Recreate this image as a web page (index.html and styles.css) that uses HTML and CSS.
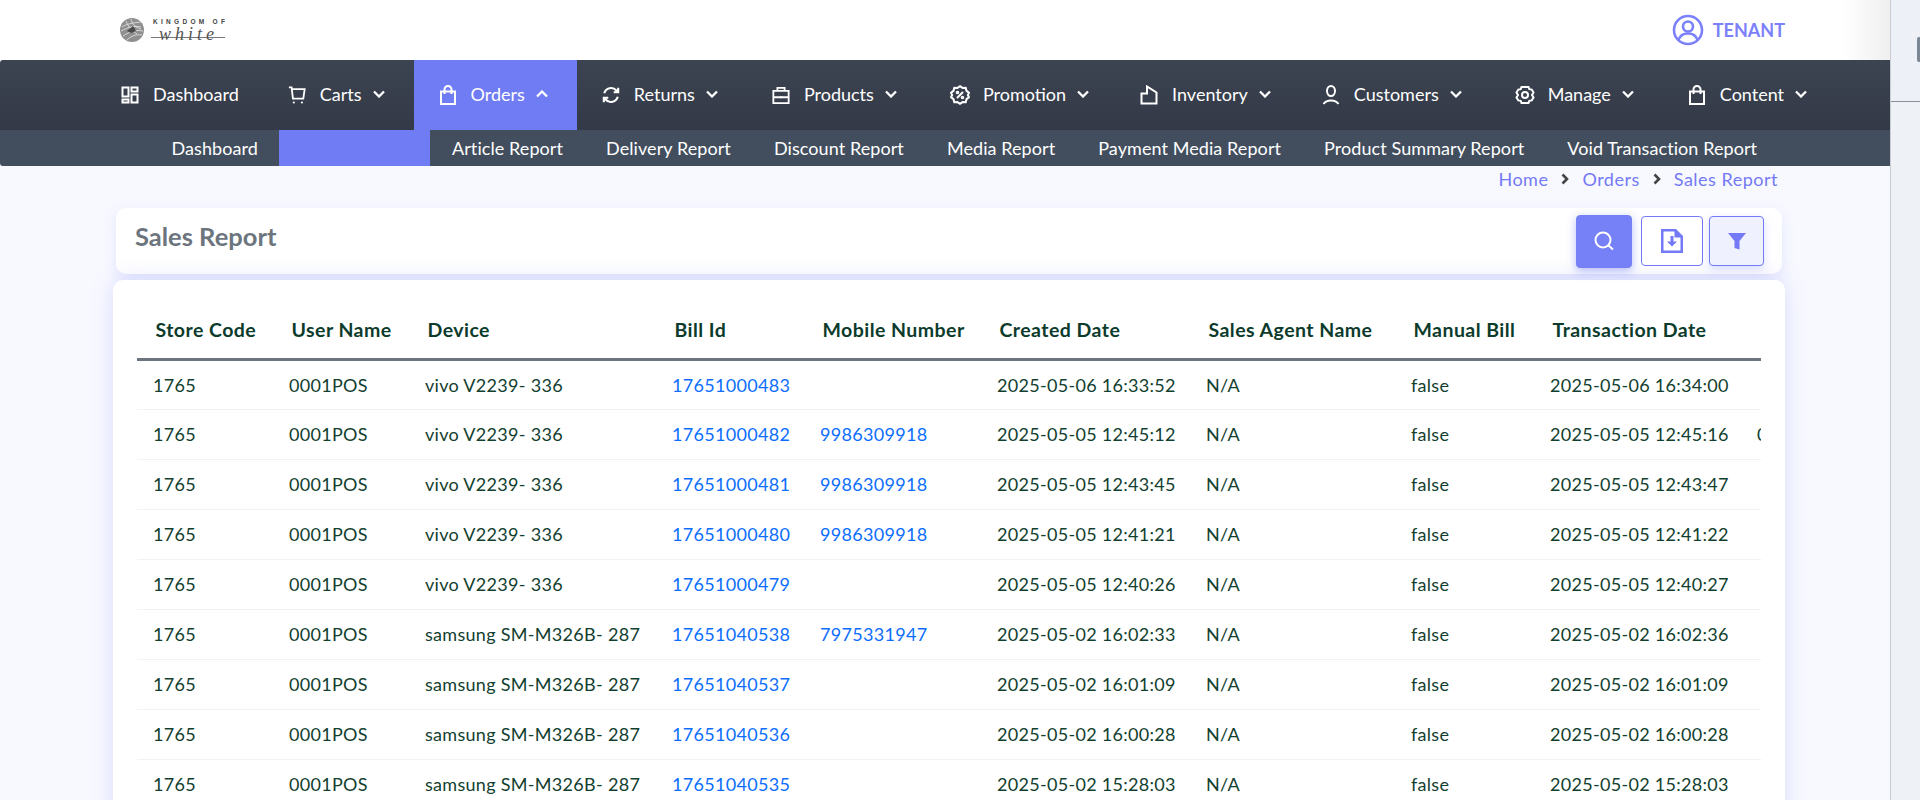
FILE: index.html
```html
<!DOCTYPE html>
<html lang="en">
<head>
<meta charset="utf-8">
<title>Sales Report</title>
<link rel="stylesheet" href="styles.css">
</head>
<body>
<div class="shell">
  <div class="app">
    <header class="topbar">
      <div class="logo">
        <svg class="logo-mark" viewBox="0 0 24 24" width="24" height="24"><circle cx="12" cy="12" r="12" fill="#8f8f8f"/><g fill="none" stroke="#e8e8e8" stroke-width=".8"><path d="M2 9c5-3 9-4 19-5M1 13c6-3 12-6 20-4M3 18c5-3 11-7 20-5M7 22c4-4 9-6 15-5M6 3c2 5 5 9 11 13M11 1c1 4 3 8 10 10"/></g><path d="M7 13l6-5 3 5-5 2z" fill="#4a4a4a"/></svg>
        <div class="logo-text"><span class="logo-top">KINGDOM OF</span><span class="logo-script">white</span></div>
      </div>
      <div class="tenant">
        <svg viewBox="0 0 32 32" width="32" height="32" fill="none" stroke="#7c80fb" stroke-width="2.6"><circle cx="16" cy="16" r="14"/><circle cx="16" cy="12.5" r="5"/><path d="M6.500 26c1.500-5 5.500-6.500 9.500-6.500s8 1.500 9.500 6.500"/></svg>
        <span>TENANT</span>
      </div>
    </header>

    <nav class="mainnav">
      <a class="nav-item first"><svg class="ico" viewBox="0 0 18 18"><path d="M1.500 1.500h6v9h-6zM10.500 1.500h6v4h-6zM1.500 13.500h6v3h-6zM10.500 8.500h6v8h-6z"/></svg><span>Dashboard</span></a>
      <a class="nav-item"><svg class="ico" viewBox="0 0 20 20"><path d="M1 1.500h3l1.500 12.500h11.500l1.500-10.500H4.300"/><circle cx="6.500" cy="18.300" r="1.200" fill="#fff" stroke="none"/><circle cx="15.500" cy="18.300" r="1.200" fill="#fff" stroke="none"/></svg><span>Carts</span><svg class="chev" viewBox="0 0 12 8"><path d="M1 1.500l5 5 5-5"/></svg></a>
      <a class="nav-item active"><svg class="ico" viewBox="0 0 18 20"><path d="M2 6.500h14V19H2zM5.500 9V4.500a3.500 3.500 0 0 1 7 0V9"/></svg><span>Orders</span><svg class="chev" viewBox="0 0 12 8"><path d="M1 6.500l5-5 5 5"/></svg></a>
      <a class="nav-item"><svg class="ico thick" viewBox="0 0 20 20"><path d="M2.500 8a7.800 7.800 0 0 1 13.500-3l2 2M17.500 12a7.800 7.800 0 0 1-13.500 3l-2-2M18 2v5h-5M2 18v-5h5"/></svg><span>Returns</span><svg class="chev" viewBox="0 0 12 8"><path d="M1 1.500l5 5 5-5"/></svg></a>
      <a class="nav-item"><svg class="ico" viewBox="0 0 20 20"><path d="M1.500 5.500h17V19h-17zM6 5.500V2h8v3.500M1.500 12.500h17"/><path d="M9 11.500h2v2H9z" fill="#fff" stroke="none"/></svg><span>Products</span><svg class="chev" viewBox="0 0 12 8"><path d="M1 1.500l5 5 5-5"/></svg></a>
      <a class="nav-item promo"><svg class="ico wide" viewBox="0 0 20 20"><path d="M10 1.200l2.600 1.700 3.100-.1.800 3 2.400 1.900-1 2.300 1 2.300-2.400 1.900-.8 3-3.100-.1L10 18.800l-2.600-1.700-3.100.1-.8-3-2.400-1.900 1-2.300-1-2.300L3.500 5.800l.8-3 3.100.1zM13 7l-6 6"/><circle cx="7.500" cy="7.500" r=".8"/><circle cx="12.500" cy="12.500" r=".8"/></svg><span>Promotion</span><svg class="chev" viewBox="0 0 12 8"><path d="M1 1.500l5 5 5-5"/></svg></a>
      <a class="nav-item inv"><svg class="ico" viewBox="0 0 18 20"><path d="M1.500 8.500H7V1.500l9.500 6V18.500h-15z"/></svg><span>Inventory</span><svg class="chev" viewBox="0 0 12 8"><path d="M1 1.500l5 5 5-5"/></svg></a>
      <a class="nav-item"><svg class="ico" viewBox="0 0 18 20"><ellipse cx="9" cy="6" rx="4" ry="5"/><path d="M1.500 19c2-3 4.500-3.500 7.500-3.500s5.500.5 7.500 3.500"/></svg><span>Customers</span><svg class="chev" viewBox="0 0 12 8"><path d="M1 1.500l5 5 5-5"/></svg></a>
      <a class="nav-item"><svg class="ico wide" viewBox="0 0 20 20"><path d="M6.500 2h7l.8 2.200 2.400.4 1.800 3L17 10l1.500 2.400-1.800 3-2.400.4-.8 2.200h-7l-.8-2.200-2.400-.4-1.800-3L3 10 1.500 7.600l1.800-3 2.400-.4z"/><circle cx="10" cy="10" r="3"/></svg><span>Manage</span><svg class="chev" viewBox="0 0 12 8"><path d="M1 1.500l5 5 5-5"/></svg></a>
      <a class="nav-item"><svg class="ico" viewBox="0 0 18 20"><path d="M2 6.500h14V19H2zM5.500 9V4.500a3.500 3.500 0 0 1 7 0V9"/></svg><span>Content</span><svg class="chev" viewBox="0 0 12 8"><path d="M1 1.500l5 5 5-5"/></svg></a>
    </nav>

    <nav class="subnav">
      <a class="sub-item">Dashboard</a>
      <a class="sub-item sub-active"></a>
      <a class="sub-item">Article Report</a>
      <a class="sub-item">Delivery Report</a>
      <a class="sub-item">Discount Report</a>
      <a class="sub-item">Media Report</a>
      <a class="sub-item">Payment Media Report</a>
      <a class="sub-item">Product Summary Report</a>
      <a class="sub-item">Void Transaction Report</a>
    </nav>

    <main class="content">
      <div class="crumbs">
        <a>Home</a><svg class="crumb-sep" viewBox="0 0 8 12"><path d="M1.500 1.500l4.500 4.500-4.500 4.500"/></svg>
        <a>Orders</a><svg class="crumb-sep" viewBox="0 0 8 12"><path d="M1.500 1.500l4.500 4.500-4.500 4.500"/></svg>
        <a>Sales Report</a>
      </div>

      <section class="title-card">
        <h1>Sales Report</h1>
        <div class="actions">
          <button class="btn btn-search"><svg viewBox="0 0 22 22" width="22" height="22" fill="none" stroke="#fff" stroke-width="2"><circle cx="10" cy="10" r="7.500"/><path d="M15.500 15.500l4.500 4"/></svg></button>
          <button class="btn btn-file"><svg viewBox="0 0 24 26" width="24" height="26"><path fill="#7479f5" fill-rule="evenodd" d="M1 1h15l7 7v17H1zM3.500 3.500v19h17V9.500H14.500V3.500z"/><path fill="#7479f5" d="M10.500 8h3v5.500H17L12 18.500 7 13.500h3.500z"/></svg></button>
          <button class="btn btn-filter"><svg viewBox="0 0 20 20" width="20" height="20"><path fill="#7479f5" d="M1 2h18l-6.500 8v8.500l-5-1.500v-7z"/></svg></button>
        </div>
      </section>

      <section class="table-card">
        <div class="table-wrap">
          <table class="report">
            <colgroup>
              <col class="c1"><col class="c2"><col class="c3"><col class="c4"><col class="c5"><col class="c6"><col class="c7"><col class="c8"><col class="c9"><col class="c10">
            </colgroup>
            <thead>
              <tr><th>Store Code</th><th>User Name</th><th>Device</th><th>Bill Id</th><th>Mobile Number</th><th>Created Date</th><th>Sales Agent Name</th><th>Manual Bill</th><th>Transaction Date</th><th></th></tr>
            </thead>
            <tbody>
              <tr><td>1765</td><td>0001POS</td><td>vivo V2239- 336</td><td><a>17651000483</a></td><td></td><td>2025-05-06 16:33:52</td><td>N/A</td><td>false</td><td>2025-05-06 16:34:00</td><td></td></tr>
              <tr><td>1765</td><td>0001POS</td><td>vivo V2239- 336</td><td><a>17651000482</a></td><td><a>9986309918</a></td><td>2025-05-05 12:45:12</td><td>N/A</td><td>false</td><td>2025-05-05 12:45:16</td><td>0</td></tr>
              <tr><td>1765</td><td>0001POS</td><td>vivo V2239- 336</td><td><a>17651000481</a></td><td><a>9986309918</a></td><td>2025-05-05 12:43:45</td><td>N/A</td><td>false</td><td>2025-05-05 12:43:47</td><td></td></tr>
              <tr><td>1765</td><td>0001POS</td><td>vivo V2239- 336</td><td><a>17651000480</a></td><td><a>9986309918</a></td><td>2025-05-05 12:41:21</td><td>N/A</td><td>false</td><td>2025-05-05 12:41:22</td><td></td></tr>
              <tr><td>1765</td><td>0001POS</td><td>vivo V2239- 336</td><td><a>17651000479</a></td><td></td><td>2025-05-05 12:40:26</td><td>N/A</td><td>false</td><td>2025-05-05 12:40:27</td><td></td></tr>
              <tr><td>1765</td><td>0001POS</td><td>samsung SM-M326B- 287</td><td><a>17651040538</a></td><td><a>7975331947</a></td><td>2025-05-02 16:02:33</td><td>N/A</td><td>false</td><td>2025-05-02 16:02:36</td><td></td></tr>
              <tr><td>1765</td><td>0001POS</td><td>samsung SM-M326B- 287</td><td><a>17651040537</a></td><td></td><td>2025-05-02 16:01:09</td><td>N/A</td><td>false</td><td>2025-05-02 16:01:09</td><td></td></tr>
              <tr><td>1765</td><td>0001POS</td><td>samsung SM-M326B- 287</td><td><a>17651040536</a></td><td></td><td>2025-05-02 16:00:28</td><td>N/A</td><td>false</td><td>2025-05-02 16:00:28</td><td></td></tr>
              <tr><td>1765</td><td>0001POS</td><td>samsung SM-M326B- 287</td><td><a>17651040535</a></td><td></td><td>2025-05-02 15:28:03</td><td>N/A</td><td>false</td><td>2025-05-02 15:28:03</td><td></td></tr>
            </tbody>
          </table>
        </div>
      </section>
    </main>
  </div>
  <aside class="strip">
    <div class="strip-top"><span class="strip-handle"></span></div>
    <div class="strip-rest"></div>
  </aside>
</div>
</body>
</html>
```

FILE: styles.css
```css
* { box-sizing: border-box; }
html, body { margin: 0; height: 800px; overflow: hidden; }
body { font-family: Lato, "Noto Sans", sans-serif; font-size: 18px; color: #12402f; background: #f8f9ff; }
.shell { display: flex; height: 800px; }
.app { flex: 1 1 auto; min-width: 0; overflow: hidden; background: #f8f9ff; }

.topbar { height: 60px; display: flex; align-items: center; justify-content: space-between; padding: 0 105px 0 120px; background: linear-gradient(90deg, #fff 97.500%, #efefef 100%); }
.logo { display: flex; align-items: center; gap: 7px; }
.logo-text { display: flex; flex-direction: column; width: 76px; }
.logo-top { font-family: "Liberation Sans", sans-serif; font-size: 6.500px; font-weight: 700; letter-spacing: 3.300px; color: #444; line-height: 8px; white-space: nowrap; margin-left: 2px; }
.logo-script { font-family: "Liberation Serif", serif; font-style: italic; font-size: 18px; letter-spacing: 4px; line-height: 16px; color: #555; padding-left: 8px; background: linear-gradient(#777, #777) 0 11px / 74px 1px no-repeat; }
.tenant { display: flex; align-items: center; gap: 9px; color: #7c80fb; font-weight: 700; font-size: 18px; }

.mainnav { height: 70px; display: flex; padding-left: 96px; background: linear-gradient(180deg, #3c4351, #333947); border-radius: 3px 0 0 0; }
.nav-item { display: flex; align-items: center; padding: 0 29px 3px 25px; color: #fff; font-size: 18px; white-space: nowrap; }
.nav-item.first { padding-right: 24px; }
.nav-item.promo { padding-right: 26px; }
.nav-item.inv { padding-right: 26px; }
.nav-item.active { background: #707cf3; }
.ico { width: 18px; height: 20px; margin: 2px 14px 0 0; fill: none; stroke: #fff; stroke-width: 2; flex: none; }
.ico.wide { width: 20px; margin: 2px 13px 0 -1px; }
.ico.thick { stroke-width: 2.300; }
.chev { width: 12px; height: 8px; margin-left: 11px; fill: none; stroke: #fff; stroke-width: 2.300; flex: none; }

.subnav { height: 36px; display: flex; padding-left: 150px; background: #424e5e; border-radius: 0 0 0 3px; }
.sub-item { display: flex; align-items: center; padding: 0 21.500px 1px; color: #fff; font-size: 18px; letter-spacing: .08px; white-space: nowrap; }
.sub-active { width: 151px; background: #707cf3; padding: 0; }

.content { padding: 0 105px 0 113px; }
.crumbs { height: 42px; padding: 0 7px 16px 0; display: flex; align-items: center; justify-content: flex-end; gap: 13px; font-size: 18px; letter-spacing: .5px; color: #7479f5; }
.crumb-sep { width: 8px; height: 12px; fill: none; stroke: #444; stroke-width: 2.600; }

.title-card { margin: 0 3px; height: 66px; padding: 0 18px 0 19px; display: flex; align-items: center; justify-content: space-between; background: #fff; border-radius: 10px; box-shadow: 0 4px 14px rgba(112, 124, 243, .16); }
.title-card h1 { margin: 0 0 10px; font-size: 25.500px; font-weight: 700; color: #6c757d; }
.actions { display: flex; align-items: center; }
.btn { display: flex; align-items: center; justify-content: center; padding: 0; border-radius: 4px; border: 1px solid #7479f5; background: #fff; height: 50px; }
.btn-search { width: 56px; height: 53px; background: #7680f7; border-color: #7680f7; margin-right: 9px; box-shadow: 0 3px 10px rgba(112, 124, 243, .5); }
.btn-file { width: 62px; margin-right: 6px; }
.btn-filter { width: 55px; background: #f0f1fe; box-shadow: 0 3px 8px rgba(112, 124, 243, .25); }

.table-card { margin-top: 6px; height: 560px; padding: 25px 24px 0; background: #fff; border-radius: 10px; box-shadow: 0 0 22px rgba(112, 124, 243, .22); }
.table-wrap { overflow: hidden; }
.report { border-collapse: collapse; table-layout: fixed; width: 1760px; }
.c1, .c2 { width: 136px; }
.c3 { width: 247px; }
.c4 { width: 148px; }
.c5 { width: 177px; }
.c6 { width: 209px; }
.c7 { width: 205px; }
.c8 { width: 139px; }
.c9 { width: 207px; }
.c10 { width: 156px; }
.report th { height: 54px; padding: 0 0 4px 18.500px; text-align: left; font-size: 19.500px; font-weight: 700; letter-spacing: .45px; color: #0c3b2c; border-bottom: 3px solid #6c757d; white-space: nowrap; }
.report td { height: 50px; padding: 0 0 0 16px; font-size: 18px; letter-spacing: .3px; color: #12402f; border-bottom: 1px solid #f1f2f7; white-space: nowrap; }
.report a { color: #0d6efd; }

.strip { flex: 0 0 30px; border-left: 1px solid #c9ccd1; background: #edf0f6; display: flex; flex-direction: column; }
.strip-top { height: 102px; border-bottom: 1px solid #8d9196; position: relative; }
.strip-handle { position: absolute; right: 0; top: 37px; width: 3px; height: 25px; background: #7c8793; border-radius: 2px 0 0 2px; }
.strip-rest { flex: 1; background: #eef1f6; }
```
